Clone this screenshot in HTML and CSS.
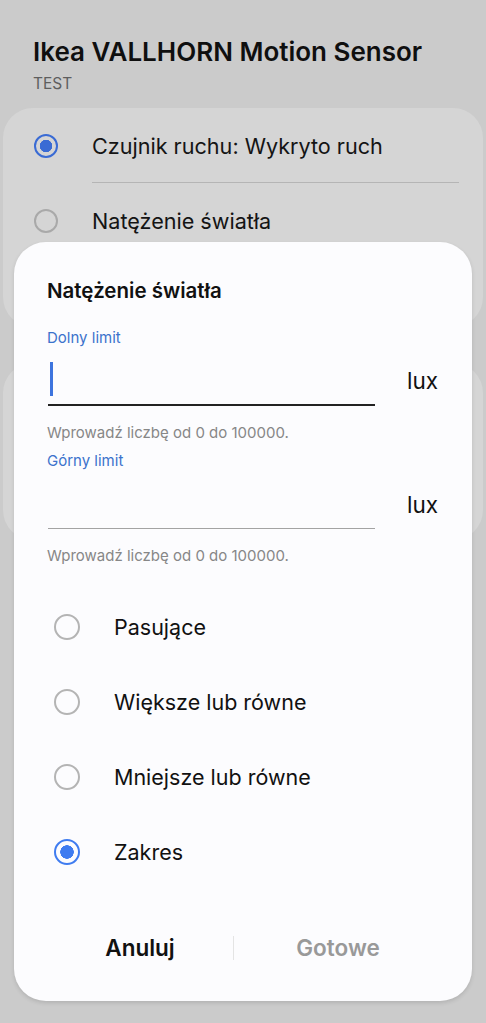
FILE: index.html
```html
<!DOCTYPE html>
<html lang="pl">
<head>
    <meta charset="UTF-8">
    <meta name="viewport" content="width=device-width, initial-scale=1.0">
    <title>Natężenie światła</title>
    <link rel="stylesheet" href="styles.css">
</head>
<body>
    <div class="page">
        <div class="header">
            <h1 class="title">Ikea VALLHORN Motion Sensor</h1>
            <p class="subtitle">TEST</p>
        </div>

        <div class="card card-first">
            <div class="row">
                <span class="radio checked"></span>
                <span class="row-text">Czujnik ruchu: Wykryto ruch</span>
            </div>
            <div class="divider"></div>
            <div class="row row-second">
                <span class="radio"></span>
                <span class="row-text">Natężenie światła</span>
            </div>
        </div>
        <div class="card card-second"></div>
    </div>

    <!-- DIALOG -->
    <div class="dialog">
        <h2 class="dialog-title">Natężenie światła</h2>

        <div class="field-label label-first">Dolny limit</div>
        <div class="field-row">
            <div class="field active"><span class="cursor"></span></div>
            <span class="unit unit-first">lux</span>
        </div>
        <div class="helper helper-first">Wprowadź liczbę od 0 do 100000.</div>

        <div class="field-label label-second">Górny limit</div>
        <div class="field-row">
            <div class="field"></div>
            <span class="unit unit-second">lux</span>
        </div>
        <div class="helper helper-second">Wprowadź liczbę od 0 do 100000.</div>

        <div class="options">
            <div class="option"><span class="option-radio"></span><span>Pasujące</span></div>
            <div class="option"><span class="option-radio"></span><span>Większe lub równe</span></div>
            <div class="option"><span class="option-radio"></span><span>Mniejsze lub równe</span></div>
            <div class="option"><span class="option-radio checked"></span><span>Zakres</span></div>
        </div>

        <div class="actions">
            <button class="action cancel">Anuluj</button>
            <span class="action-sep"></span>
            <button class="action done">Gotowe</button>
        </div>
    </div>
</body>
</html>
```

FILE: styles.css
```css
body { margin: 0; width: 486px; height: 1023px; overflow: hidden; position: relative; background-color: #cbcbcb; font-family: Inter, Roboto, sans-serif; color: #111; }
.page { padding-top: 37px; }

/* FOND (ECRAN ASSOMBRI) */
.header { padding-left: 33px; }
.title { margin: 0; font-size: 26px; line-height: 30px; font-weight: 600; color: #0f0f0f; }
.subtitle { margin: 8px 0 0; font-size: 15.5px; line-height: 18px; color: #5e5e5e; }

.card { margin: 0 3px; background-color: #d5d5d5; border-radius: 30px; }
.card-first { margin-top: 15px; height: 219px; padding-top: 10px; box-sizing: border-box; }
.card-second { margin-top: 36px; height: 177px; }

.row { display: flex; align-items: center; gap: 34px; height: 56px; padding-left: 31px; }
.row-second { margin-top: 10px; }
.row-text { font-size: 21.6px; color: #141414; }
.divider { height: 1px; background-color: #b5b5b5; margin: 8px 24px 0 89px; }

.radio { width: 24px; height: 24px; box-sizing: border-box; border-radius: 50%; border: 2px solid #a9a9a9; flex-shrink: 0; }
.radio.checked { border: 2.5px solid #3a6bd4; background: radial-gradient(circle, #3a6bd4 0 6px, transparent 6.5px); }

/* BOITE DE DIALOGUE */
.dialog {
    position: absolute;
    top: 242px;
    left: 14px;
    width: 458px;
    height: 759px;
    box-sizing: border-box;
    padding: 37px 0 0 33px;
    background-color: #fcfcfe;
    border-radius: 32px;
    box-shadow: 0 2px 4px rgba(0, 0, 0, 0.12);
}
.dialog-title { margin: 0; font-size: 20.5px; line-height: 24px; font-weight: 600; }

.field-label { font-size: 15px; line-height: 18px; color: #3b72cc; }
.label-first { margin-top: 26px; }
.label-second { margin-top: 10px; }

.field-row { display: flex; align-items: flex-start; gap: 32px; }
.field { width: 327px; margin-left: 1px; box-sizing: border-box; height: 59px; border-bottom: 1.5px solid #a3a3a3; }
.field.active { height: 58.5px; padding-top: 15px; border-bottom: 2.5px solid #222; }
.cursor { display: block; width: 2.5px; height: 34px; margin-left: 2px; background-color: #3d74de; }
.unit { font-size: 22.5px; line-height: 26px; color: #111; }
.unit-first { margin-top: 21px; }
.unit-second { margin-top: 22px; }

.helper { font-size: 15px; line-height: 18px; color: #878787; }
.helper-first { margin-top: 18px; }
.helper-second { margin-top: 18px; }

/* OPTIONS */
.options { margin-top: 24.5px; }
.option { display: flex; align-items: center; gap: 34px; height: 75px; padding-left: 7px; font-size: 21.5px; }
.option-radio { width: 26px; height: 26px; box-sizing: border-box; border-radius: 50%; border: 2px solid #b4b4b4; flex-shrink: 0; }
.option-radio.checked { border: 2.5px solid #3f7cf0; background: radial-gradient(circle, #3f7cf0 0 6.5px, transparent 7px); }

/* BOUTONS */
.actions { display: flex; align-items: center; height: 58px; margin-top: 29.5px; }
.action { border: none; background: none; padding: 0; font-family: inherit; font-size: 22.5px; font-weight: 600; cursor: pointer; }
.cancel { width: 186px; color: #111; }
.done { width: 208px; color: #999; }
.action-sep { width: 1px; height: 24px; background-color: #e4e4e4; }
```
